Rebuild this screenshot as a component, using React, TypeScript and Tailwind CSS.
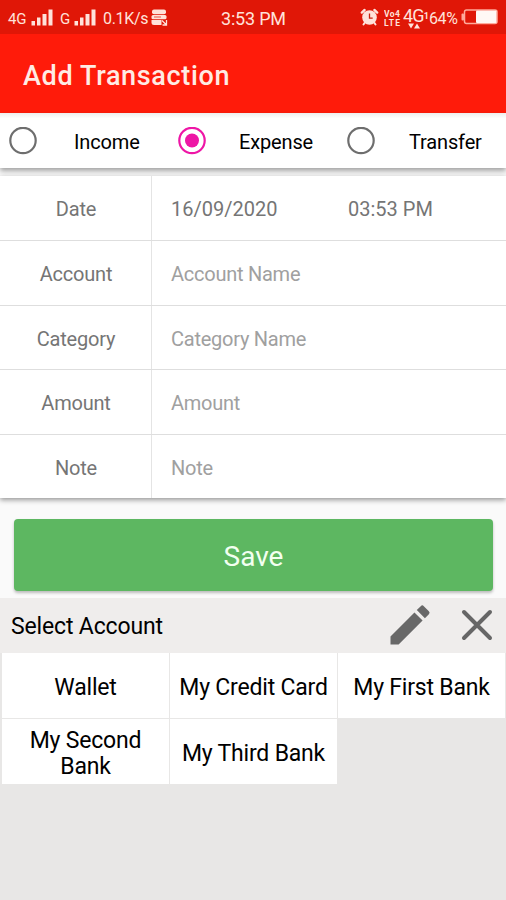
import { MdEdit } from "react-icons/md";

const types = [
  { label: "Income", checked: false, box: "w-[169px]", text: "ml-[37px]" },
  { label: "Expense", checked: true, box: "w-[169px]", text: "ml-[33px]" },
  { label: "Transfer", checked: false, box: "w-[150px]", text: "ml-[34px]" },
];

const fields = [
  { label: "Account", placeholder: "Account Name" },
  { label: "Category", placeholder: "Category Name" },
  { label: "Amount", placeholder: "Amount" },
  { label: "Note", placeholder: "Note" },
];

const accounts = ["Wallet", "My Credit Card", "My First Bank", "My Second Bank", "My Third Bank"];

function Signal() {
  return (
    <svg width="22" height="17" viewBox="0 0 22 17" fill="currentColor" className="shrink-0">
      <rect x="0.5" y="12" width="3.5" height="4.5" />
      <rect x="6" y="8.5" width="3.5" height="8" />
      <rect x="11.5" y="5" width="4" height="11.5" />
      <rect x="17.5" y="0.5" width="4" height="16" />
    </svg>
  );
}

function StatusBar() {
  return (
    <div className="flex h-[34px] items-center bg-[#e01707] pt-0.5 text-[#ffe2da]">
      {/* Networks */}
      <div className="flex w-[221px] items-center pl-2">
        <span className="w-[23px] pt-0.5 text-[15px] tracking-[-0.2px]">4G</span>
        <div className="mb-0.5"><Signal /></div>
        <span className="ml-[7px] w-[14px] pt-0.5 text-[15px]">G</span>
        <div className="mb-0.5"><Signal /></div>
        <span className="ml-[7px] w-[48px] pt-0.5 text-[16px] tracking-[-0.3px] whitespace-nowrap">0.1K/s</span>
        <svg width="17" height="17" viewBox="0 0 17 17" className="mb-0.5 shrink-0" fill="currentColor">
          <rect x="1" y="0.5" width="14" height="4.7" rx="2" />
          <rect x="0.5" y="6" width="15" height="4.2" rx="1.5" />
          <path d="M0.5 11h10v5H3a2.5 2.5 0 0 1-2.5-2.5z" />
          <path d="M11 11.5l4.5 4.5M15.5 11v5h-4" fill="none" stroke="currentColor" strokeWidth="1.3" />
          <path d="M3 8h7" stroke="#e01707" strokeWidth="0.7" />
        </svg>
      </div>

      <span className="w-[139px] text-[18px] tracking-[-0.2px]">3:53 PM</span>

      {/* Alarm, data and battery */}
      <svg width="19" height="18" viewBox="0 0 19 18" className="mb-0.5 shrink-0" fill="currentColor">
        <circle cx="9.5" cy="9.5" r="7.3" />
        <path d="M1.8 4.6L4.6 2M17.2 4.6L14.4 2" stroke="currentColor" strokeWidth="2.4" strokeLinecap="round" />
        <path d="M4.5 15l-1 1.5M14.5 15l1 1.5" stroke="currentColor" strokeWidth="2" strokeLinecap="round" />
        <path d="M9.5 5.5v4.7h3.2" fill="none" stroke="#c8200f" strokeWidth="1.3" />
      </svg>
      <svg width="17" height="18" viewBox="0 0 17 18" className="mr-[2px] ml-[5px] shrink-0" fill="currentColor">
        <text x="0" y="8" fontSize="8.5" fontWeight="700" textLength="16">Vo4</text>
        <text x="0" y="16.5" fontSize="8.5" fontWeight="700" textLength="16">LTE</text>
      </svg>
      <div className="flex w-[26px] flex-col">
        <div className="flex items-end text-[18px] leading-[15px] tracking-[-0.8px]">
          4G<span className="text-[9px] leading-[13px] font-bold">1</span>
        </div>
        <svg width="12" height="6" viewBox="0 0 12 6" fill="currentColor" className="ml-[5px]">
          <path d="M0 0.5h6L3 5.5zM6 5.5h6L9 0.5z" />
        </svg>
      </div>
      <span className="w-[32px] pt-0.5 text-[16px] tracking-[-0.4px]">64%</span>
      <svg width="37" height="16" viewBox="0 0 37 16" className="mb-0.5 shrink-0">
        <rect x="3.5" y="1" width="32.5" height="13.5" rx="2" fill="none" stroke="#ffab9b" strokeWidth="1.5" />
        <rect x="0.5" y="4.5" width="2.5" height="7" rx="1" fill="#ffab9b" />
        <rect x="15" y="1.5" width="20.5" height="12.5" rx="1" fill="#fff8f5" />
      </svg>
    </div>
  );
}

function Radio({ checked }: { checked: boolean }) {
  return (
    <svg width="28" height="28" viewBox="0 0 28 28" fill="none" className={checked ? "text-[#ee16a6]" : "text-[#6e6e6e]"}>
      <circle cx="14" cy="13.5" r="12.7" stroke="currentColor" strokeWidth="2.2" />
      {checked && <circle cx="14" cy="13.5" r="7" fill="currentColor" />}
    </svg>
  );
}

export default function App() {
  return (
    <div className="flex h-[900px] w-[506px] flex-col overflow-hidden bg-[#e8e7e6] font-[Roboto,sans-serif] text-black">
      <StatusBar />

      <header className="flex h-[79px] items-center bg-[#ff1b0a] pt-1.5 pl-[23px]">
        <h1 className="text-[27px] font-medium tracking-[0.65px] text-[#ffebe4]">Add Transaction</h1>
      </header>

      <main className="h-[485px] bg-[#fafafa]">
        {/* Transaction type */}
        <div className="flex h-[55px] items-center bg-gradient-to-b from-[#eeeeee] via-white via-10% to-white pl-[9px] text-[20px] shadow-[0_3px_5px_rgba(0,0,0,0.35)]">
          {types.map((t) => (
            <div key={t.label} className={`flex shrink-0 items-center ${t.box}`}>
              <Radio checked={t.checked} />
              <span className={`${t.text} pt-0.5 tracking-[-0.15px]`}>{t.label}</span>
            </div>
          ))}
        </div>

        {/* Form */}
        <div className="mt-2 h-[322px] bg-white text-[20px] tracking-[-0.2px] text-[#757575] shadow-[0_2px_5px_rgba(0,0,0,0.4)]">
          <div className="flex h-[65px] border-b border-[#dedede]">
            <div className="flex w-[152px] items-center justify-center border-r border-[#e4e4e4] pt-0.5 pl-px">Date</div>
            <div className="flex items-center pt-0.5 pl-[19px] tracking-normal">
              <span className="w-[177px]">16/09/2020</span>
              <span>03:53 PM</span>
            </div>
          </div>
          {fields.map((f) => (
            <div key={f.label} className="flex h-[64.6px] border-b border-[#dedede] last:h-[63px] last:border-b-0">
              <div className="flex w-[152px] items-center justify-center border-r border-[#e4e4e4] pt-[3px] pl-px">{f.label}</div>
              <div className="flex items-center pt-[3px] pl-[19px] tracking-[-0.25px] text-[#a0a0a0]">{f.placeholder}</div>
            </div>
          ))}
        </div>

        <button className="mt-[21px] ml-[14px] block h-[72px] w-[479px] rounded-[4px] bg-[#5db761] pt-1 text-[28px] text-[#f2fff0] shadow-[0_2px_3px_rgba(0,0,0,0.25)]">
          Save
        </button>
      </main>

      {/* Account picker */}
      <section>
        <div className="flex h-[55px] items-center bg-[#efedec] pl-[11px]">
          <h2 className="w-[373px] pt-[3px] text-[23px] tracking-[-0.15px]">Select Account</h2>
          <MdEdit size={52} className="mb-0.5 shrink-0 text-[#686868]" />
          <svg width="32" height="32" viewBox="0 0 32 32" className="mb-0.5 ml-[25px] shrink-0" fill="none">
            <path d="M3 3l26 26M29 3L3 29" stroke="#666" strokeWidth="4" strokeLinecap="round" />
          </svg>
        </div>
        <div className="grid grid-cols-3 gap-px pr-px pl-[2px] text-[23px] leading-[26px] tracking-[-0.2px]">
          {accounts.map((name) => (
            <div key={name} className="flex h-[65px] items-center justify-center bg-white px-2 pt-1 text-center">
              {name}
            </div>
          ))}
        </div>
      </section>
    </div>
  );
}
